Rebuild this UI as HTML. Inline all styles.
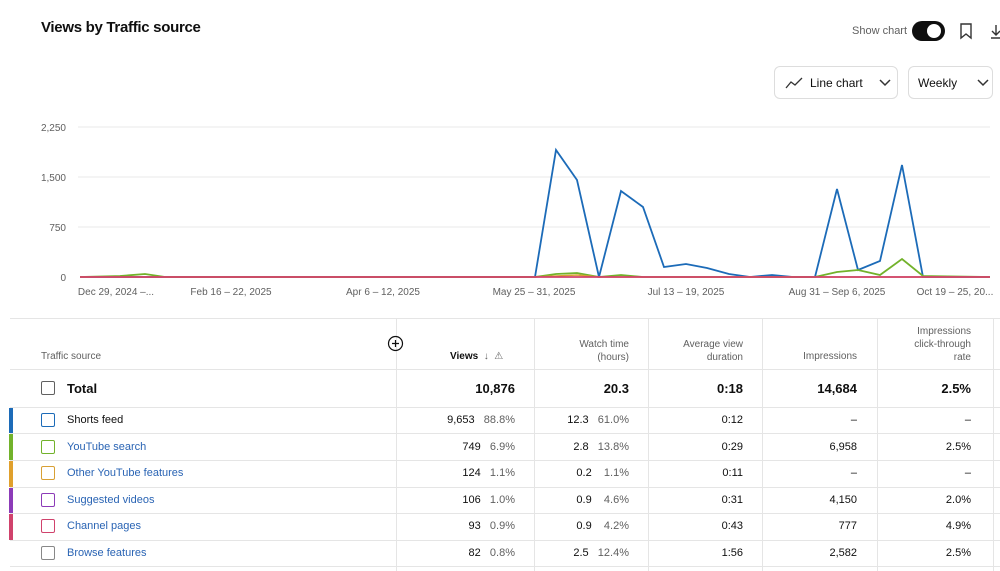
<!DOCTYPE html>
<html><head><meta charset="utf-8"><style>
*{margin:0;padding:0;box-sizing:border-box}
body{width:1000px;height:571px;overflow:hidden;background:#fff;font-family:"Liberation Sans",sans-serif;color:#0f0f0f;position:relative}
.a{position:absolute}
.t{font-size:11px;color:#0f0f0f}
.g{color:#606060}
.lnk{color:#2a64b4}
.btn{position:absolute;border:1px solid #ddd;border-radius:6px;height:33px;top:66px;font-size:12px;display:flex;align-items:center}
.r{text-align:right}
.vl{position:absolute;top:318px;bottom:0;width:1px;background:#e5e5e5}
.hl{position:absolute;left:10px;right:0;height:1px;background:#e5e5e5}
.cb{position:absolute;width:14px;height:14px;border:1.5px solid;border-radius:2px;left:41px}
.bar{position:absolute;left:9px;width:4px}
</style></head><body>
<div class="a" style="left:41px;top:19px;font-size:15px;font-weight:bold;letter-spacing:-0.3px">Views by Traffic source</div>
<div class="a" style="left:852px;top:25px;font-size:11px;color:#606060">Show chart</div>
<div class="a" style="left:912px;top:21px;width:33px;height:20px;border-radius:10px;background:#0f0f0f"></div>
<div class="a" style="left:927px;top:24px;width:14px;height:14px;border-radius:7px;background:#fff"></div>
<svg class="a" style="left:958px;top:22px" width="16" height="18"><path d="M3 2h10v14l-5-4-5 4z" fill="none" stroke="#333" stroke-width="1.4"/></svg>
<svg class="a" style="left:990px;top:22px" width="10" height="18"><path d="M6 3v10M2 9l4 4 4-4M1 16h10" fill="none" stroke="#333" stroke-width="1.4"/></svg>
<div class="btn" style="left:774px;width:124px"><svg style="margin-left:10px" width="18" height="12"><path d="M1 11l5-6 4 3 7-7" fill="none" stroke="#333" stroke-width="1.3"/></svg><span style="margin-left:7px">Line chart</span><svg style="margin-left:16px" width="12" height="8"><path d="M1 1l5 5 5-5" fill="none" stroke="#333" stroke-width="1.5"/></svg></div>
<div class="btn" style="left:908px;width:85px"><span style="margin-left:9px">Weekly</span><svg style="margin-left:20px" width="12" height="8"><path d="M1 1l5 5 5-5" fill="none" stroke="#333" stroke-width="1.5"/></svg></div>
<svg class="a" style="left:0;top:110px" width="1000" height="200">
<g stroke="#e8e8e8" stroke-width="1"><line x1="78" y1="17" x2="990" y2="17"/><line x1="78" y1="67" x2="990" y2="67"/><line x1="78" y1="117" x2="990" y2="117"/></g>
<g font-family="Liberation Sans" font-size="10" fill="#606060" text-anchor="end"><text x="66" y="21">2,250</text><text x="66" y="71">1,500</text><text x="66" y="121">750</text><text x="66" y="171">0</text></g>
<g font-family="Liberation Sans" font-size="10" fill="#606060" text-anchor="middle"><text x="116" y="185">Dec 29, 2024 –...</text><text x="231" y="185">Feb 16 – 22, 2025</text><text x="383" y="185">Apr 6 – 12, 2025</text><text x="534" y="185">May 25 – 31, 2025</text><text x="686" y="185">Jul 13 – 19, 2025</text><text x="837" y="185">Aug 31 – Sep 6, 2025</text><text x="955" y="185">Oct 19 – 25, 20...</text></g>
<polyline fill="none" stroke="#1c6bb8" stroke-width="1.8" points="80,167 535,167 556,40 577,70 599,167 621,81 643,97 664,157 686,154 707,158 729,164 750,167 772,165 793,167 815,167 837,79 858,160 880,151 902,55 923,167 990,167"/>
<polyline fill="none" stroke="#72b22b" stroke-width="1.8" points="80,167 120,166 145,164 165,167 535,167 556,164 577,163 599,167 621,165 643,167 815,167 837,162 858,160 880,165 902,149 923,166 990,167"/>
<polyline fill="none" stroke="#d8a034" stroke-width="1.5" points="80,167 535,167 577,165 599,167 990,167"/>
<polyline fill="none" stroke="#d0426c" stroke-width="1.8" points="80,167 990,167"/>
</svg>
<div class="hl" style="top:318px"></div>
<div class="hl" style="top:369px"></div>
<div class="hl" style="top:407px"></div>
<div class="hl" style="top:433px"></div>
<div class="hl" style="top:460px"></div>
<div class="hl" style="top:487px"></div>
<div class="hl" style="top:513px"></div>
<div class="hl" style="top:540px"></div>
<div class="hl" style="top:566px"></div>
<div class="vl" style="left:396px"></div><div class="vl" style="left:534px"></div><div class="vl" style="left:648px"></div><div class="vl" style="left:762px"></div><div class="vl" style="left:877px"></div><div class="vl" style="left:993px"></div>
<div class="a t g" style="left:41px;top:351px;font-size:10px">Traffic source</div>
<svg class="a" style="left:387px;top:335px" width="17" height="17"><circle cx="8.5" cy="8.5" r="7" fill="none" stroke="#0f0f0f" stroke-width="1.2"/><path d="M8.5 5v7M5 8.5h7" stroke="#0f0f0f" stroke-width="1.2"/></svg>
<div class="a" style="left:450px;top:351px;font-size:10px;font-weight:bold">Views <span style="font-weight:normal;color:#606060">&nbsp;↓&nbsp; ⚠</span></div>
<div class="a r g" style="left:540px;width:89px;top:338px;font-size:10px;line-height:13px">Watch time<br>(hours)</div>
<div class="a r g" style="left:654px;width:89px;top:338px;font-size:10px;line-height:13px">Average view<br>duration</div>
<div class="a r g" style="left:768px;width:89px;top:351px;font-size:10px">Impressions</div>
<div class="a r g" style="left:880px;width:91px;top:325px;font-size:10px;line-height:13px">Impressions<br>click-through<br>rate</div>
<div class="cb" style="top:381px;border-color:#606060"></div>
<div class="a" style="left:67px;top:381px;font-size:13px;font-weight:bold">Total</div>
<div class="a r" style="left:400px;width:115px;top:381px;font-size:13px;font-weight:bold">10,876</div>
<div class="a r" style="left:540px;width:89px;top:381px;font-size:13px;font-weight:bold">20.3</div>
<div class="a r" style="left:654px;width:89px;top:381px;font-size:13px;font-weight:bold">0:18</div>
<div class="a r" style="left:768px;width:89px;top:381px;font-size:13px;font-weight:bold">14,684</div>
<div class="a r" style="left:880px;width:91px;top:381px;font-size:13px;font-weight:bold">2.5%</div>

<div class="bar" style="top:408px;height:25px;background:#1c6bb8"></div>
<div class="cb" style="top:413px;border-color:#1c6bb8"></div>
<div class="a t" style="left:67px;top:414px">Shorts feed</div>
<div class="a t r" style="left:400px;width:115px;top:414px">9,653 &nbsp;&nbsp;<span class="g">88.8%</span></div>
<div class="a t r" style="left:540px;width:89px;top:414px">12.3 &nbsp;&nbsp;<span class="g">61.0%</span></div>
<div class="a t r" style="left:654px;width:89px;top:414px">0:12</div>
<div class="a t r" style="left:768px;width:89px;top:414px">–</div>
<div class="a t r" style="left:880px;width:91px;top:414px">–</div>

<div class="bar" style="top:434px;height:26px;background:#72b22b"></div>
<div class="cb" style="top:440px;border-color:#72b22b"></div>
<div class="a t lnk" style="left:67px;top:441px">YouTube search</div>
<div class="a t r" style="left:400px;width:115px;top:441px">749 &nbsp;&nbsp;<span class="g">6.9%</span></div>
<div class="a t r" style="left:540px;width:89px;top:441px">2.8 &nbsp;&nbsp;<span class="g">13.8%</span></div>
<div class="a t r" style="left:654px;width:89px;top:441px">0:29</div>
<div class="a t r" style="left:768px;width:89px;top:441px">6,958</div>
<div class="a t r" style="left:880px;width:91px;top:441px">2.5%</div>

<div class="bar" style="top:461px;height:26px;background:#e0a02c"></div>
<div class="cb" style="top:466px;border-color:#d8a034"></div>
<div class="a t lnk" style="left:67px;top:467px">Other YouTube features</div>
<div class="a t r" style="left:400px;width:115px;top:467px">124 &nbsp;&nbsp;<span class="g">1.1%</span></div>
<div class="a t r" style="left:540px;width:89px;top:467px">0.2 &nbsp;&nbsp;&nbsp;<span class="g">1.1%</span></div>
<div class="a t r" style="left:654px;width:89px;top:467px">0:11</div>
<div class="a t r" style="left:768px;width:89px;top:467px">–</div>
<div class="a t r" style="left:880px;width:91px;top:467px">–</div>

<div class="bar" style="top:488px;height:25px;background:#8c3bb8"></div>
<div class="cb" style="top:493px;border-color:#8c3bb8"></div>
<div class="a t lnk" style="left:67px;top:494px">Suggested videos</div>
<div class="a t r" style="left:400px;width:115px;top:494px">106 &nbsp;&nbsp;<span class="g">1.0%</span></div>
<div class="a t r" style="left:540px;width:89px;top:494px">0.9 &nbsp;&nbsp;&nbsp;<span class="g">4.6%</span></div>
<div class="a t r" style="left:654px;width:89px;top:494px">0:31</div>
<div class="a t r" style="left:768px;width:89px;top:494px">4,150</div>
<div class="a t r" style="left:880px;width:91px;top:494px">2.0%</div>

<div class="bar" style="top:514px;height:26px;background:#d0426c"></div>
<div class="cb" style="top:519px;border-color:#d0426c"></div>
<div class="a t lnk" style="left:67px;top:520px">Channel pages</div>
<div class="a t r" style="left:400px;width:115px;top:520px">93 &nbsp;&nbsp;<span class="g">0.9%</span></div>
<div class="a t r" style="left:540px;width:89px;top:520px">0.9 &nbsp;&nbsp;&nbsp;<span class="g">4.2%</span></div>
<div class="a t r" style="left:654px;width:89px;top:520px">0:43</div>
<div class="a t r" style="left:768px;width:89px;top:520px">777</div>
<div class="a t r" style="left:880px;width:91px;top:520px">4.9%</div>

<div class="cb" style="top:546px;border-color:#888"></div>
<div class="a t lnk" style="left:67px;top:547px">Browse features</div>
<div class="a t r" style="left:400px;width:115px;top:547px">82 &nbsp;&nbsp;<span class="g">0.8%</span></div>
<div class="a t r" style="left:540px;width:89px;top:547px">2.5 &nbsp;&nbsp;<span class="g">12.4%</span></div>
<div class="a t r" style="left:654px;width:89px;top:547px">1:56</div>
<div class="a t r" style="left:768px;width:89px;top:547px">2,582</div>
<div class="a t r" style="left:880px;width:91px;top:547px">2.5%</div>
</body></html>
